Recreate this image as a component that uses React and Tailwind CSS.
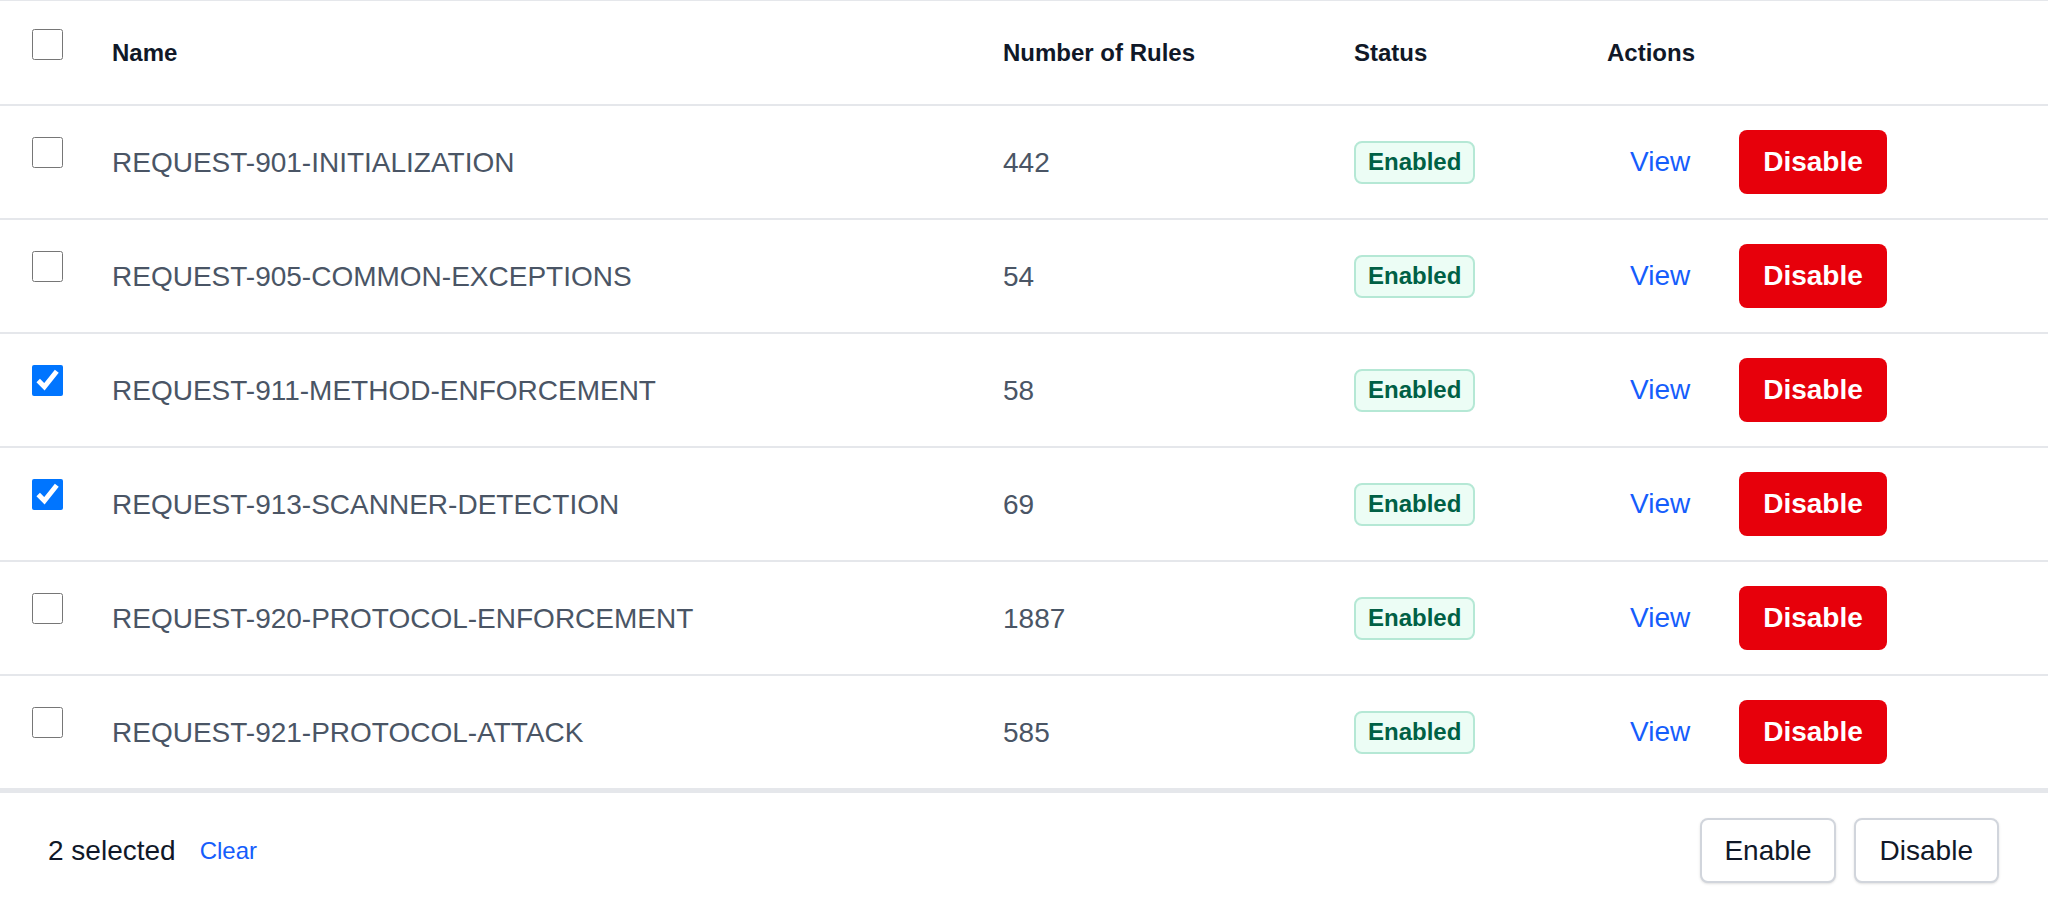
import { useState } from "react";

// ============================================
// 📋 Data
// ============================================

const initialRules = [
  { id: 901, name: "REQUEST-901-INITIALIZATION", count: 442, checked: false },
  { id: 905, name: "REQUEST-905-COMMON-EXCEPTIONS", count: 54, checked: false },
  { id: 911, name: "REQUEST-911-METHOD-ENFORCEMENT", count: 58, checked: true },
  { id: 913, name: "REQUEST-913-SCANNER-DETECTION", count: 69, checked: true },
  { id: 920, name: "REQUEST-920-PROTOCOL-ENFORCEMENT", count: 1887, checked: false },
  { id: 921, name: "REQUEST-921-PROTOCOL-ATTACK", count: 585, checked: false },
];

const gridCols = "grid grid-cols-[112px_891px_351px_253px_1fr]";

// ============================================
// ☑️ Checkbox
// ============================================

function Checkbox({ checked, onChange }) {
  return (
    <input
      type="checkbox"
      checked={checked}
      onChange={onChange}
      className="m-0 h-[31px] w-[31px] cursor-pointer accent-[#0075ff]"
    />
  );
}

// ============================================
// 🏷️ Status Badge
// ============================================

function StatusBadge() {
  return (
    <span className="inline-flex h-[43px] items-center rounded-lg border-2 border-[#b5e8d5] bg-[#ecfdf5] px-[12px] text-[24px] font-bold text-[#006045]">
      Enabled
    </span>
  );
}

// ============================================
// 🧾 App
// ============================================

export default function App() {
  const [rules, setRules] = useState(initialRules);
  const selected = rules.filter((r) => r.checked).length;

  const toggle = (id) =>
    setRules((prev) =>
      prev.map((r) => (r.id === id ? { ...r, checked: !r.checked } : r)),
    );

  return (
    <div
      className="min-h-[908px] w-full bg-white"
      style={{ fontFamily: '"Liberation Sans", Arial, sans-serif' }}
    >
      {/* Header */}
      <div
        className={`${gridCols} h-[106px] border-t border-b-2 border-[#e5e7eb] text-[24px] font-bold text-gray-900`}
      >
        <div className="pl-[32px] pt-[28px]">
          <Checkbox
            checked={selected === rules.length}
            onChange={() => {}}
          />
        </div>
        <div className="self-center">Name</div>
        <div className="self-center">Number of Rules</div>
        <div className="self-center">Status</div>
        <div className="self-center">Actions</div>
      </div>

      {/* Rows */}
      {rules.map((rule) => (
        <div
          key={rule.id}
          className={`${gridCols} h-[114px] border-b-2 border-[#e5e7eb] text-[28px] text-gray-600`}
        >
          <div className="pl-[32px] pt-[31px]">
            <Checkbox checked={rule.checked} onChange={() => toggle(rule.id)} />
          </div>
          <div className="self-center pt-[2px]">{rule.name}</div>
          <div className="self-center pt-[2px]">{rule.count}</div>
          <div className="self-center">
            <StatusBadge />
          </div>
          <div className="flex items-center">
            <button className="px-[23px] text-[28px] text-[#155dfc]">
              View
            </button>
            <button className="ml-[26px] h-[64px] rounded-lg bg-[#e7000b] px-[24px] text-[28px] font-bold text-white">
              Disable
            </button>
          </div>
        </div>
      ))}

      {/* Footer / Bulk actions */}
      <div className="flex h-[118px] items-center justify-between border-t-[3px] border-[#e5e7eb] pl-[48px] pr-[49px]">
        <div className="flex items-center gap-[24px]">
          <span className="text-[28px] text-gray-900">{selected} selected</span>
          <button className="text-[24px] text-[#155dfc]">Clear</button>
        </div>
        <div className="flex items-center gap-[18px]">
          <button className="h-[65px] rounded-lg border-2 border-gray-300 bg-white px-[22px] text-[28px] text-gray-900 shadow-sm">
            Enable
          </button>
          <button className="h-[65px] rounded-lg border-2 border-gray-300 bg-white px-[24px] text-[28px] text-gray-900 shadow-sm">
            Disable
          </button>
        </div>
      </div>
    </div>
  );
}
